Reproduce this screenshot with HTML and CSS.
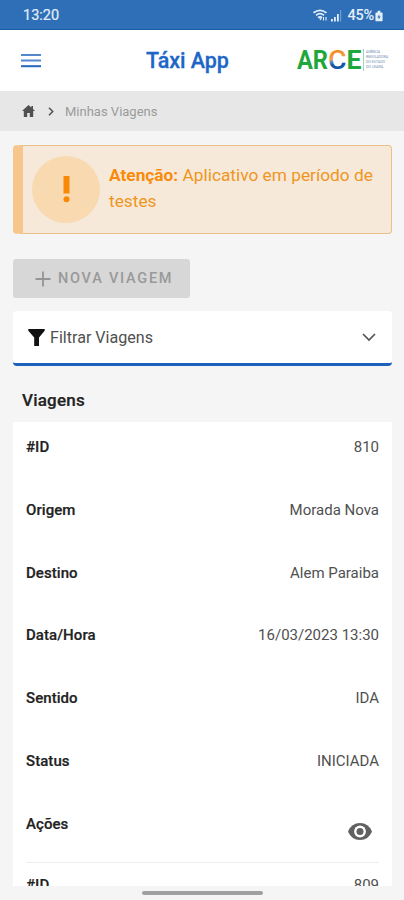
FILE: index.html
```html
<!DOCTYPE html>
<html lang="pt-BR">
<head>
<meta charset="utf-8">
<meta name="viewport" content="width=device-width, initial-scale=1">
<title>Táxi App</title>
<link rel="stylesheet" href="styles.css">
</head>
<body>
<div class="status-bar">
  <span class="clock">13:20</span>
  <div class="status-icons">
    <svg class="wifi" width="15" height="13" viewBox="0 0 15 13" fill="none" stroke="currentColor" stroke-width="1.7">
      <path d="M.5 3.8Q7 -1.2 13.500 3.800M3 6.300Q7 3 11 6.300M5 8.600Q7 7 9 8.600"/>
      <path d="M6 9.300h3l-1.500 2.200z" fill="currentColor" stroke="none"/>
      <path d="M10.500 11.500V8M13 8v3.500" stroke-width="1.100"/>
    </svg>
    <svg class="signal" width="11" height="12" viewBox="0 0 11 12" fill="currentColor">
      <path d="M0 9h1.800v2.500H0zM3 7h1.800v4.500H3zM6 4h1.800v7.500H6z"/>
      <path d="M9.200 0h1v11.500h-1z" opacity=".45"/>
    </svg>
    <span class="battery-level">45%</span>
    <svg class="battery" width="8" height="12" viewBox="0 0 9 12">
      <path d="M3 0h3v2h1.500q1 0 1 1v8q0 1-1 1h-6q-1 0-1-1V3q0-1 1-1H3z" fill="currentColor"/>
      <path d="M4.800 4 2.600 7.600h1.700L4 10.300l2.400-3.800H4.800z" fill="#2e6fb7"/>
    </svg>
  </div>
</div>
<header class="app-header">
  <svg class="menu" width="20" height="15" viewBox="0 0 20 15">
    <path d="M0 1h20v2H0zM0 6.500h20v2H0z" fill="#5288cc"/>
    <path d="M0 12.200h20v2H0z" fill="#2567bd"/>
  </svg>
  <h1>Táxi App</h1>
  <svg class="logo" width="94" height="28" viewBox="0 0 94 28">
    <defs>
      <linearGradient id="ring" x1="0" y1="0" x2="0.15" y2="1">
        <stop offset="0.25" stop-color="#f58a1f"/>
        <stop offset="0.5" stop-color="#f2a04c"/>
        <stop offset="0.57" stop-color="#6b8fb8"/>
        <stop offset="0.68" stop-color="#1555a6"/>
      </linearGradient>
    </defs>
    <g class="logo-word">
      <text x="0" y="23" textLength="31" lengthAdjust="spacingAndGlyphs">AR</text>
      <text class="logo-ring" x="31" y="23" textLength="18.5" lengthAdjust="spacingAndGlyphs" fill="url(#ring)">C</text>
      <text x="49.500" y="23" textLength="15" lengthAdjust="spacingAndGlyphs">E</text>
    </g>
    <path d="M66.500 3v22" stroke="#a5d3af" stroke-width="1"/>
    <g class="logo-tag">
      <text x="69" y="7" textLength="14">AGÊNCIA</text>
      <text x="69" y="12" textLength="22">REGULADORA</text>
      <text x="69" y="17" textLength="19">DO ESTADO</text>
      <text x="69" y="22" textLength="17">DO CEARÁ</text>
    </g>
  </svg>
</header>
<nav class="breadcrumb">
  <svg width="13" height="12" viewBox="0 0 13 12" fill="#505050"><path d="M6.500 0 0 6h1.800v6h3.400V8h2.600v4h3.400V6H13l-2-1.900V1H9.400v1.600z"/></svg>
  <svg class="separator" width="6" height="9" viewBox="0 0 6 9" fill="none" stroke="#505050" stroke-width="1.500"><path d="m1 .8 3.700 3.700L1 8.200"/></svg>
  <span>Minhas Viagens</span>
</nav>
<main>
  <section class="alert">
    <div class="alert-icon">
      <svg width="7" height="27" viewBox="0 0 7 27" fill="#f98806"><path d="M.5 0h6v17.500h-6z"/><circle cx="3.500" cy="23.200" r="3"/></svg>
    </div>
    <p><strong>Atenção:</strong> Aplicativo em período de testes</p>
  </section>
  <button class="new-trip" disabled>
    <svg width="16" height="16" viewBox="0 0 16 16" stroke="#959595" stroke-width="1.800"><path d="M8 .5v15M.5 8h15"/></svg>
    <span>NOVA VIAGEM</span>
  </button>
  <section class="filter">
    <svg width="17" height="17" viewBox="0 0 17 17" fill="#111"><path d="M.3 0h16.400v1.800L11 8.400V17H6.200V8.400L.3 1.800z"/></svg>
    <span>Filtrar Viagens</span>
    <svg class="chevron" width="14" height="9" viewBox="0 0 14 9" fill="none" stroke="#555" stroke-width="1.700"><path d="m1 1 6 6 6-6"/></svg>
  </section>
  <h2>Viagens</h2>
  <section class="trips">
    <dl class="trip">
      <div><dt>#ID</dt><dd>810</dd></div>
      <div><dt>Origem</dt><dd>Morada Nova</dd></div>
      <div><dt>Destino</dt><dd>Alem Paraiba</dd></div>
      <div><dt>Data/Hora</dt><dd>16/03/2023 13:30</dd></div>
      <div><dt>Sentido</dt><dd>IDA</dd></div>
      <div><dt>Status</dt><dd>INICIADA</dd></div>
      <div><dt>Ações</dt><dd class="action"><svg width="24" height="17" viewBox="0 0 24 17"><path d="M0 8.500Q3.500 0 12 0t12 8.500Q20.500 17 12 17T0 8.500z" fill="#606060"/><circle cx="12" cy="8.500" r="5.900" fill="#fff"/><circle cx="12" cy="8.500" r="3.500" fill="#606060"/></svg></dd></div>
    </dl>
    <dl class="trip">
      <div><dt>#ID</dt><dd>809</dd></div>
    </dl>
  </section>
</main>
<footer class="gesture-bar"><span></span></footer>
</body>
</html>
```
FILE: styles.css
```css
* { box-sizing: border-box; }
body {
  margin: 0;
  height: 900px;
  overflow: hidden;
  display: flex;
  flex-direction: column;
  background: #f5f5f5;
  color: #222;
  font-family: Roboto, "Liberation Sans", sans-serif;
}
svg { display: block; flex: none; }
.status-bar {
  height: 30px;
  flex: none;
  padding: 2px 21px 0 23px;
  display: flex;
  align-items: center;
  justify-content: space-between;
  background: #2e6fb7;
  border-bottom: 1px solid #1b5ca5;
  color: #e4effa;
  font-size: 14.5px;
}
.clock { -webkit-text-stroke: .2px; }
.status-icons { display: flex; align-items: center; }
.signal { margin: 0 5px 0 3px; }
.battery-level { font-size: 14.5px; font-weight: 500; letter-spacing: -.2px; }
.battery { margin-left: 1px; }
.app-header {
  height: 61px;
  flex: none;
  display: grid;
  grid-template-columns: 124px 1fr 94px;
  align-items: center;
  padding: 0 13px 0 21px;
  background: #fff;
}
h1 { margin: 0 0 0 1px; font-size: 21.5px; font-weight: 500; color: #1c66c7; line-height: 30px; letter-spacing: -.05px; -webkit-text-stroke: .3px; }
.logo { margin-top: -2px; }
.logo-word { font-size: 26px; font-weight: 700; fill: #1ea83c; }
.logo-ring { font-weight: 500; }
.logo-tag { font-size: 3.6px; fill: #7891b8; }
.breadcrumb {
  height: 40px;
  flex: none;
  display: flex;
  align-items: center;
  padding-left: 22px;
  background: #e7e7e7;
  color: #9b9b9b;
  font-size: 13px;
}
.separator { margin: 0 11px 0 13px; }
main { flex: 1; min-height: 0; padding: 14px 12px 0 13px; display: flex; flex-direction: column; }
.alert {
  height: 89px;
  flex: none;
  display: flex;
  align-items: center;
  gap: 9px;
  padding-left: 9px;
  border: 1px solid #ecc08a;
  border-left: 10px solid #f7c68d;
  border-radius: 4px;
  background: #f6e9d9;
  color: #ef961f;
}
.alert-icon {
  width: 68px;
  height: 67px;
  flex: none;
  border-radius: 50%;
  background: #f8d9b0;
  display: grid;
  place-items: center;
}
.alert p { margin: -3px 0 0; font-size: 17.3px; line-height: 26px; }
.alert strong { font-weight: 700; color: #f98b0c; }
.new-trip {
  width: 177px;
  height: 39px;
  flex: none;
  margin-top: 25px;
  padding: 0 0 0 22px;
  display: flex;
  align-items: center;
  gap: 7px;
  border: 0;
  border-radius: 3px;
  background: #d7d7d7;
  color: #999;
  font: 500 14.5px Roboto, sans-serif;
  letter-spacing: 1.75px;
}
.filter {
  height: 55px;
  flex: none;
  margin-top: 13px;
  padding: 0 16px 0 15px;
  display: flex;
  align-items: center;
  gap: 5px;
  border-bottom: 3px solid #1c62bb;
  border-radius: 4px;
  background: #fff;
  color: #505050;
  font-size: 16.1px;
}
.filter span { padding-top: 1px; }
.chevron { margin-left: auto; }
h2 { margin: 22px 0 10px 9px; font-size: 17px; line-height: 24px; font-weight: 500; letter-spacing: .2px; -webkit-text-stroke: .2px; }
.trips { height: 464px; flex: none; padding: 0 13px; overflow: hidden; background: #fff; }
.trip { margin: 0; height: 441px; border-bottom: 1px solid #eee; }
.trip div { height: 62.75px; display: flex; justify-content: space-between; padding-top: 14px; line-height: 22px; }
.trip + .trip { margin-top: -3px; border: 0; }
dt { font-size: 15px; font-weight: 500; letter-spacing: .06px; -webkit-text-stroke: .2px; }
dd { margin: 0; font-size: 15px; color: #505050; }
.action { padding: 10px 7px 0 0; }
.gesture-bar { height: 14px; flex: none; display: flex; justify-content: center; padding: 5px 0 0 1px; }
.gesture-bar span { width: 121px; height: 4px; border-radius: 2px; background: #a0a0a0; }
```
